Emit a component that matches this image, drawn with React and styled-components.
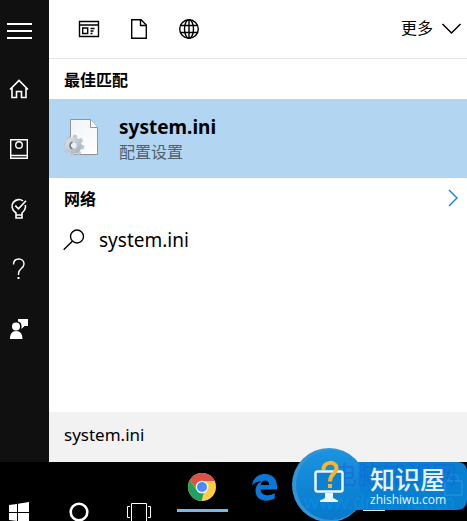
import React from "react";
import styled, { createGlobalStyle } from "styled-components";

const Global = createGlobalStyle`
  *, *::before, *::after { box-sizing: border-box; }
  body { margin: 0; background: #000; font-family: "Noto Sans", "Noto Sans CJK SC", sans-serif; color: #000; }
  button, input { font: inherit; color: inherit; border: 0; padding: 0; margin: 0; background: none; }
  svg { display: block; flex: none; }
`;

const Screen = styled.div`
  display: flex;
  flex-direction: column;
  min-height: 100vh;
  overflow: hidden;
  position: relative;
`;
const Search = styled.div`
  flex: 1;
  display: flex;
`;
const Sidebar = styled.nav`
  width: 49px;
  background: #101010;
  color: #fff;
  display: flex;
  flex-direction: column;
`;
const SideButton = styled.button`
  height: 60px;
  padding: 0 0 2px 7px;
  display: flex;
  align-items: center;
`;
const Panel = styled.main`
  flex: 1;
  min-width: 0;
  background: #fff;
  display: flex;
  flex-direction: column;
`;
const Filters = styled.header`
  height: 59px;
  border-bottom: 1px solid #e4e4e4;
  display: flex;
  align-items: center;
  gap: 26px;
  padding: 0 5px 0 28px;
`;
const IconButton = styled.button`
  display: flex;
`;
const More = styled.button`
  margin-left: auto;
  display: flex;
  align-items: center;
  gap: 8px;
  padding-bottom: 2px;
  font-size: 16px;
  line-height: 24px;
`;
const Heading = styled.h2`
  margin: 0;
  height: 40px;
  padding: 0 8px 0 15px;
  display: flex;
  align-items: center;
  justify-content: space-between;
  font-size: 16px;
  font-weight: 700;
`;
const BestMatch = styled.button`
  height: 79px;
  background: #b2d5f1;
  display: flex;
  align-items: center;
  gap: 19px;
  padding-left: 15px;
  text-align: left;
`;
const Lines = styled.span`
  display: flex;
  flex-direction: column;
`;
const Title = styled.span`
  font-size: 19px;
  line-height: 26px;
  font-weight: 700;
`;
const Subtitle = styled.span`
  font-size: 16px;
  line-height: 24px;
  color: #50606d;
`;
const WebResult = styled.button`
  height: 44px;
  padding-left: 14px;
  display: flex;
  align-items: center;
  gap: 14px;
  font-size: 19px;
`;
const Query = styled.input`
  margin-top: auto;
  width: 100%;
  height: 50px;
  padding: 0 15px 5px;
  background: #f2f2f2;
  font-size: 17px;
  outline: none;
  border-radius: 0;
`;
const Taskbar = styled.footer`
  height: 59px;
  background: #000;
  color: #fff;
  display: flex;
  overflow: hidden;
`;
const TaskButton = styled.button`
  width: ${(p) => p.$width}px;
  padding-top: ${(p) => p.$top}px;
  display: flex;
  flex-direction: column;
  align-items: center;
  gap: 8px;
`;
const Running = styled.span`
  width: 51px;
  height: 3px;
  background: #76b9ed;
`;
const Badge = styled.aside`
  position: absolute;
  right: 0;
  bottom: 0;
  width: 175px;
  height: 73px;
`;
const BadgeArt = styled.svg`
  position: absolute;
  inset: 0;
`;
const Ghost = styled.div`
  position: absolute;
  inset: 12px 6px 0 12px;
  white-space: nowrap;
  color: #1766dc;
`;
const GhostName = styled.div`
  padding-left: 28px;
  font-size: 25px;
  line-height: 28px;
  opacity: 0.6;
`;
const GhostSite = styled.div`
  font-size: 19px;
  line-height: 28px;
  color: #0a8fe6;
  opacity: 0.7;
`;
const BadgeText = styled.div`
  position: absolute;
  left: 78px;
  top: 16px;
  color: #e4f2fb;
`;
const BadgeName = styled.div`
  font: 500 25px/28px "Noto Sans CJK SC", sans-serif;
`;
const BadgeSite = styled.div`
  font: 12px/16px "Open Sans", sans-serif;
`;

const Line = ({ size = 24, children }) => (
  <svg width={size} height={size} viewBox={`0 0 ${size} ${size}`} fill="none" stroke="currentColor" strokeWidth="1.4" aria-hidden="true">
    {children}
  </svg>
);

const side = [
  ["菜单", <svg width="26" height="24"><path d="M0 7h25M0 14h25M0 21h25" stroke="#fff" strokeWidth="2" /></svg>],
  ["主页", <Line><path d="M3 12.5 12 3.5l9 9M5 11v9.5h4.500v-6h5v6H19V11" strokeWidth="1.6" /></Line>],
  ["笔记本", <Line><path d="M3.700 2.700h16.600v18.600H3.700zM4 18.500h16" /><circle cx="12" cy="8" r="3.300" /></Line>],
  ["提示", <Line><path d="M18.300 8c1 3.800-1.300 6.200-3.300 8v2H9v-2C4.300 12.500 4 8.300 6.500 5.100 9.200 2 13.500 1.900 16 4M9 18v3h6v-3M8.300 8.600l3.200 3.200 7.500-8" strokeWidth="1.600" /></Line>],
  ["帮助", <Line><path d="M6.500 7.500C6.500 4 8.700 2 11.700 2s5.300 2 5.300 5c0 4.500-5.500 4.700-5.500 9.500v1.500" /><path d="M11.500 20v2" strokeWidth="2" /></Line>],
  ["反馈", <svg width="24" height="24" fill="#fff"><circle cx="9" cy="9.500" r="4" /><path d="M3 22c0-5 2-8 6.200-8s6.300 3 6.300 8zM11 2h10v7h-3.500L14.500 12V9c0-2.500-1-4-3.500-4.500z" /></svg>],
];

const FileIcon = () => (
  <svg width="36" height="40" viewBox="0 0 36 40" aria-hidden="true">
    <defs>
      <linearGradient id="paper" x1="0" y1="0" x2="1" y2="1"><stop stopColor="#f1f3f5" /><stop offset="1" stopColor="#fff" /></linearGradient>
      <linearGradient id="gear" x1="0" y1="0" x2="1" y2="1"><stop stopColor="#d9e0e5" /><stop offset="1" stopColor="#a9b4bd" /></linearGradient>
    </defs>
    <path d="M6.500.500h20l7 8v27h-27z" fill="url(#paper)" stroke="#8e969c" />
    <path d="M26.500.500v8h7" fill="#fff" stroke="#8e969c" />
    <g transform="translate(9.500 26.500)">
      {[0, 45, 90, 135, 180, 225, 270, 315].map((a) => (
        <path key={a} d="M-2.700-6.500-1.800-10.800H1.800L2.700-6.500z" transform={`rotate(${a + 10})`} fill="#bfc9d1" />
      ))}
      <circle r="5.600" fill="#e9eff3" stroke="url(#gear)" strokeWidth="5" />
      <path d="M-1 3.200A3.300 3.300 0 0 1-1-3.200" fill="none" stroke="#6f7b84" strokeWidth="1.500" />
    </g>
  </svg>
);

const Chrome = () => (
  <svg width="28" height="28" viewBox="0 0 28 28" aria-hidden="true">
    <circle cx="14" cy="14" r="14" fill="#ffcd46" />
    <path d="M1.900 7A14 14 0 0 1 26.700 8H14a6 6 0 0 0-5.500 8z" fill="#dd5144" />
    <path d="M1.900 7 8.700 17a6 6 0 0 0 7 3L13.500 28A14 14 0 0 1 1.900 7" fill="#1da261" />
    <circle cx="14" cy="14" r="6.300" fill="#f1f5fa" />
    <circle cx="14" cy="14" r="5" fill="#4c8bf5" />
  </svg>
);

export default function App() {
  return (
    <Screen>
      <Global />
      <Search>
        <Sidebar>
          {side.map(([label, icon]) => (
            <SideButton key={label} aria-label={label}>{icon}</SideButton>
          ))}
        </Sidebar>
        <Panel>
          <Filters>
            <IconButton aria-label="应用">
              <Line><path d="M2.500 4.500h19v15h-19zM3 8h18M5.700 11h5v5.500h-5zM13.500 11.500h4M13.500 14h3M13.500 16.500h2" /></Line>
            </IconButton>
            <IconButton aria-label="文档">
              <Line><path d="M4.700 2.700h9.300l5.300 5.300v13.300H4.700zM13.500 3v5.500h5.500" /></Line>
            </IconButton>
            <IconButton aria-label="网页">
              <Line><circle cx="12" cy="12" r="9.300" /><ellipse cx="12" cy="12" rx="4.500" ry="9.300" /><path d="M12 3v18M3.500 8.500h17M3.500 15.500h17" /></Line>
            </IconButton>
            <More>
              更多
              <svg width="21" height="13" fill="none" stroke="#000" strokeWidth="1.500"><path d="m1.500 2 9 9 9-9" /></svg>
            </More>
          </Filters>
          <Heading>最佳匹配</Heading>
          <BestMatch>
            <FileIcon />
            <Lines>
              <Title>system.ini</Title>
              <Subtitle>配置设置</Subtitle>
            </Lines>
          </BestMatch>
          <Heading>
            网络
            <svg width="12" height="18" fill="none" stroke="#1683d8" strokeWidth="1.400"><path d="m2 1 8 8-8 8" /></svg>
          </Heading>
          <WebResult>
            <Line size={22}><circle cx="14" cy="7.500" r="6.500" /><path d="m9.300 12.200-8.600 8.600" /></Line>
            system.ini
          </WebResult>
          <Query aria-label="搜索" defaultValue="system.ini" />
        </Panel>
      </Search>
      <Taskbar>
        <TaskButton $width={38} $top={40} aria-label="开始">
          <svg width="20" height="20" fill="#fff"><path d="m0 3 8-1v8H0zM9 1.800 20 0v10H9zM0 11h8v8l-8-1zM9 11h11v9L9 19z" /></svg>
        </TaskButton>
        <TaskButton $width={82} $top={40} aria-label="Cortana">
          <svg width="20" height="20"><circle cx="10" cy="10" r="8.300" fill="none" stroke="#fff" strokeWidth="2.600" /></svg>
        </TaskButton>
        <TaskButton $width={38} $top={40} aria-label="任务视图">
          <svg width="24" height="20" fill="none" stroke="#fff"><path d="M4.500 1.500h15v20h-15zM3 4.500H.500v11H3M21 4.500h2.500v11H21" /></svg>
        </TaskButton>
        <TaskButton $width={88} $top={11} aria-label="Chrome">
          <Chrome />
          <Running />
        </TaskButton>
        <TaskButton $width={36} $top={12} aria-label="Edge">
          <svg width="25" height="27" viewBox="0 0 25 27"><path d="M0 11.500C1 4.500 6 0 13 0c7.500 0 12 5 12 12v3.500H8.500c.3 6 8.500 7.500 14.200 3.500v5.500C14 29 3.500 26.500 3.500 16.500c0-4.300 2.500-7.500 6-9C5.500 7.300 2.500 8.500 0 11.500M8.700 11h8.500c0-6-7.800-6-8.500 0" fill="#0878d8" /></svg>
        </TaskButton>
      </Taskbar>
      <Badge>
        <BadgeArt width="175" height="73" aria-hidden="true">
          <defs><linearGradient id="blue" x1="0" y1="0" x2="0" y2="1"><stop stopColor="#1b93e0" /><stop offset="1" stopColor="#0879cb" /></linearGradient></defs>
          <path d="M60 14h105c7 0 10 4 10 10v28c0 6-4 10-10 10H60z" fill="#087fd0" />
          <circle cx="37" cy="37" r="37" fill="#3094d5" />
          <circle cx="39" cy="37" r="35" fill="url(#blue)" />
          <path d="M68 14h12v48H68z" fill="#087fd0" />
          <path d="M153 33h17v14h-17zM157 33v-3c0-5 9-5 9 0v3" fill="none" stroke="#2798df" />
          <path d="M71 62.500h22" stroke="#d7e9f6" />
        </BadgeArt>
        <Ghost>
          <GhostName>电脑知识网</GhostName>
          <GhostSite>www.dnzs.net.cn</GhostSite>
        </Ghost>
        <BadgeArt width="175" height="73" aria-hidden="true">
          <rect x="23.500" y="23.500" width="27" height="20" rx="2" fill="#0c81d2" stroke="#eaf6fd" strokeWidth="2.500" />
          <path d="M33 45h8v5l5 2.500v1.500H28v-1.500l5-2.500z" fill="#eaf6fd" />
          <path d="M31.500 22c-.5-9.500 13.500-9 13-1.500-.5 6-6.500 5-6.500 13" fill="none" stroke="#f8b62b" strokeWidth="4" />
          <path d="M36 36h4v4h-4z" fill="#f8b62b" />
        </BadgeArt>
        <BadgeText>
          <BadgeName>知识屋</BadgeName>
          <BadgeSite>zhishiwu.com</BadgeSite>
        </BadgeText>
      </Badge>
    </Screen>
  );
}
